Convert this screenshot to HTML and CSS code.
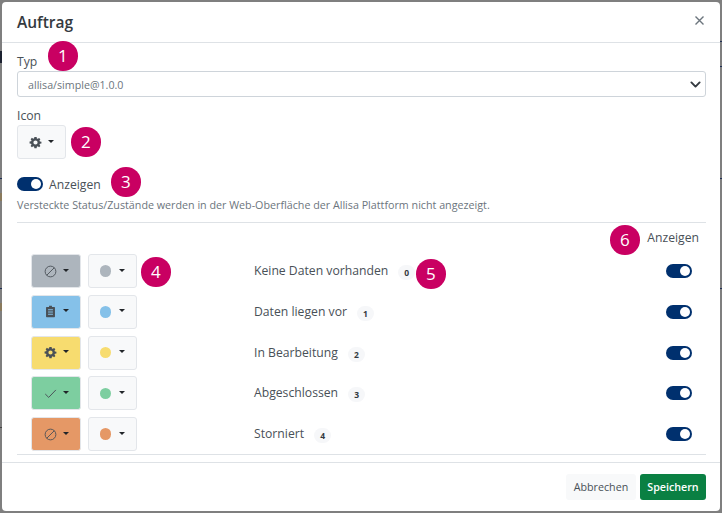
FILE: index.html
```html
<!DOCTYPE html>
<html lang="de">
<head>
<meta charset="utf-8">
<title>Auftrag</title>
<link rel="stylesheet" href="styles.css">
</head>
<body>
<svg class="defs" width="0" height="0" aria-hidden="true">
  <symbol id="i-gear" viewBox="0 0 16 16"><path fill="currentColor" d="M9.4 1.1l.3 1.9c.4.1.8.3 1.1.5l1.6-1.1 1.6 1.6-1.1 1.6c.2.3.4.7.5 1.1l1.9.3v2.2l-1.9.3c-.1.4-.3.8-.5 1.1l1.1 1.6-1.6 1.6-1.6-1.1c-.3.2-.7.4-1.1.5l-.3 1.9H6.6l-.3-1.9c-.4-.1-.8-.3-1.1-.5l-1.6 1.1-1.6-1.6 1.1-1.6c-.2-.3-.4-.7-.5-1.1L.7 9.1V6.9l1.9-.3c.1-.4.3-.8.5-1.1L2 3.9l1.6-1.6 1.6 1.1c.3-.2.7-.4 1.1-.5l.3-1.8zM8 5.4A2.6 2.6 0 1 0 8 10.6 2.6 2.6 0 1 0 8 5.4z"/></symbol>
  <symbol id="i-ban" viewBox="0 0 16 16"><g fill="none" stroke="currentColor" stroke-width="1.1"><circle cx="8" cy="8" r="6.6"/><path d="M12.7 3.3 3.3 12.7"/></g></symbol>
  <symbol id="i-list" viewBox="0 0 16 16"><path fill="currentColor" d="M6.2 1h3.6v1.4h2.9c.5 0 .8.4.8.8v11c0 .5-.4.8-.8.8H3.3c-.5 0-.8-.4-.8-.8v-11c0-.5.4-.8.8-.8h2.9zM5 5.2v1.2h6V5.2zm0 2.8v1.2h6V8zm0 2.8V12h6v-1.2z"/></symbol>
  <symbol id="i-check" viewBox="0 0 16 16"><path fill="none" stroke="currentColor" stroke-width="1.2" d="M1.5 8.6 5.8 12.8 14.6 3.6"/></symbol>
</svg>

<main class="dialog">
  <header class="dialog-head">
    <h1 class="title">Auftrag</h1>
    <svg class="close" width="9" height="9" viewBox="0 0 9 9" aria-label="Schließen"><path fill="none" stroke="#6c757d" stroke-width="1.4" d="M.5.5l8 8M8.5.5l-8 8"/></svg>
  </header>

  <section class="dialog-body">
    <label class="label label-typ">Typ</label>
    <div class="select">
      <span>allisa/simple@1.0.0</span>
      <svg class="chevron" width="11" height="11" viewBox="0 0 16 16"><path fill="none" stroke="#343a40" stroke-width="2.8" stroke-linecap="round" stroke-linejoin="round" d="M2 5l6 6 6-6"/></svg>
    </div>

    <label class="label label-icon">Icon</label>
    <button class="pick pick-light"><svg class="ico"><use href="#i-gear"/></svg><i class="caret"></i></button>

    <div class="show-row">
      <span class="switch"></span>
      <span class="show-text">Anzeigen</span>
    </div>
    <p class="hint">Versteckte Status/Zustände werden in der Web-Oberfläche der Allisa Plattform nicht angezeigt.</p>

    <div class="table-head">Anzeigen</div>

    <div class="rows">
      <div class="row">
        <div class="pickers">
          <button class="pick c-gray"><svg class="ico"><use href="#i-ban"/></svg><i class="caret"></i></button>
          <button class="pick pick-light"><span class="dot c-gray"></span><i class="caret"></i></button>
        </div>
        <span class="name">Keine Daten vorhanden</span><span class="count">0</span>
        <span class="switch switch-end"></span>
      </div>
      <div class="row">
        <div class="pickers">
          <button class="pick c-blue"><svg class="ico"><use href="#i-list"/></svg><i class="caret"></i></button>
          <button class="pick pick-light"><span class="dot c-blue"></span><i class="caret"></i></button>
        </div>
        <span class="name">Daten liegen vor</span><span class="count">1</span>
        <span class="switch switch-end"></span>
      </div>
      <div class="row">
        <div class="pickers">
          <button class="pick c-yellow"><svg class="ico"><use href="#i-gear"/></svg><i class="caret"></i></button>
          <button class="pick pick-light"><span class="dot c-yellow"></span><i class="caret"></i></button>
        </div>
        <span class="name">In Bearbeitung</span><span class="count">2</span>
        <span class="switch switch-end"></span>
      </div>
      <div class="row">
        <div class="pickers">
          <button class="pick c-green"><svg class="ico"><use href="#i-check"/></svg><i class="caret"></i></button>
          <button class="pick pick-light"><span class="dot c-green"></span><i class="caret"></i></button>
        </div>
        <span class="name">Abgeschlossen</span><span class="count">3</span>
        <span class="switch switch-end"></span>
      </div>
      <div class="row">
        <div class="pickers">
          <button class="pick c-orange"><svg class="ico"><use href="#i-ban"/></svg><i class="caret"></i></button>
          <button class="pick pick-light"><span class="dot c-orange"></span><i class="caret"></i></button>
        </div>
        <span class="name">Storniert</span><span class="count">4</span>
        <span class="switch switch-end"></span>
      </div>
    </div>
  </section>

  <footer class="dialog-foot">
    <button class="btn btn-cancel">Abbrechen</button>
    <button class="btn btn-save">Speichern</button>
  </footer>

  <span class="mark m1">1</span>
  <span class="mark m2">2</span>
  <span class="mark m3">3</span>
  <span class="mark m4">4</span>
  <span class="mark m5">5</span>
  <span class="mark m6">6</span>
</main>
</body>
</html>
```

FILE: styles.css
```css
* { box-sizing: border-box; }
html, body { height: 100%; }
body {
  margin: 0;
  padding: 2px;
  overflow: hidden;
  background-color: #7f7f7f;
  background-repeat: no-repeat;
  background-image:
    linear-gradient(#1b2130, #1b2130), linear-gradient(#8a7a5c, #8a7a5c),
    linear-gradient(#8a7a5c, #8a7a5c), linear-gradient(#1f2f55, #1f2f55),
    linear-gradient(#1f2f55, #1f2f55), linear-gradient(#444, #444),
    linear-gradient(#1f2f55, #1f2f55), linear-gradient(#1f2f55, #1f2f55),
    linear-gradient(#1f2f55, #1f2f55), linear-gradient(#1f2f55, #1f2f55);
  background-size:
    2px 12px, 2px 8px, 2px 8px, 2px 1px, 2px 1px, 2px 1px,
    2px 1px, 2px 1px, 2px 1px, 2px 1px;
  background-position:
    0 51px, 0 193px, 0 303px, 0 178px, 0 288px, 0 427px,
    720px 41px, 720px 66px, 720px 178px, 720px 288px;
  color: #343a40;
  font-family: "Open Sans", "Noto Sans", sans-serif;
  font-size: 12.2px;
}
.defs { position: absolute; }
button { font: inherit; color: inherit; }

.dialog {
  position: relative;
  width: 718px;
  height: 509px;
  background: #fff;
  border-radius: 4px;
  display: flex;
  flex-direction: column;
}
.dialog-head {
  height: 41px;
  flex: none;
  border-bottom: 1px solid #dee2e6;
  padding: 0 14px 0 15px;
  display: flex;
  align-items: center;
  justify-content: space-between;
}
.title { margin: 0; font-size: 15.5px; font-weight: 600; color: #343a40; }
.close { margin: -3px 2px 0 0; }

.dialog-body { flex: 1; padding: 0 14px 0 15px; }
.label { display: block; color: #495057; line-height: 16px; }
.label-typ { margin-top: 11px; height: 17px; }
.label-icon { margin-top: 11px; height: 17px; }

.select {
  height: 26px;
  border: 1px solid #ced4da;
  border-radius: 3px;
  padding: 2px 4px 0 10px;
  display: flex;
  align-items: center;
  justify-content: space-between;
  font-size: 10.7px;
  color: #6c757d;
}
.chevron { margin-top: -2px; }
.pick {
  width: 49px;
  height: 34px;
  padding: 0;
  border: 1px solid #e3e6ea;
  border-radius: 3px;
  background: #f8f9fa;
  display: flex;
  align-items: center;
  justify-content: center;
  gap: 6px;
  color: #495057;
}
.ico { width: 13px; height: 13px; }
.caret {
  width: 0;
  height: 0;
  margin-top: -2px;
  border-left: 3.5px solid transparent;
  border-right: 3.5px solid transparent;
  border-top: 3.5px solid #212529;
}
.dot { width: 11.5px; height: 11.5px; border-radius: 50%; margin-right: 2px; }

.show-row { display: flex; align-items: center; gap: 6px; margin-top: 16px; height: 18px; }
.show-text { color: #495057; }
.switch {
  position: relative;
  flex: none;
  width: 26px;
  height: 14px;
  border-radius: 7px;
  background: #00306e;
}
.switch::after {
  content: "";
  position: absolute;
  top: 2px;
  right: 2px;
  width: 10px;
  height: 10px;
  border-radius: 50%;
  background: #fff;
}
.hint {
  margin: 5px 0 0;
  padding-bottom: 10px;
  border-bottom: 1px solid #dee2e6;
  font-size: 10.73px;
  line-height: 14px;
  white-space: nowrap;
  color: #6c757d;
}
.table-head { text-align: right; padding-right: 7px; line-height: 16px; height: 31px; padding-top: 7px; color: #495057; }

.rows { height: 201px; border-bottom: 1px solid #dee2e6; }
.row {
  height: 40.75px;
  padding: 0 14px;
  display: flex;
  align-items: flex-start;
}
.pickers { display: flex; gap: 7px; width: 223px; flex: none; }
.pickers .pick:first-child { width: 50px; }
.name { line-height: 34px; color: #495057; }
.count {
  margin: 11px 0 0 10px;
  min-width: 17px;
  height: 15px;
  padding: 0 5px;
  border-radius: 8px;
  background: #f6f7f9;
  font-size: 8.5px;
  font-weight: 700;
  line-height: 15px;
  text-align: center;
  color: #343a40;
}
.switch-end { margin: 10px 0 0 auto; }

.c-gray { background: #adb5bd; }
.c-blue { background: #85c1e9; }
.c-yellow { background: #f7dc6f; }
.c-green { background: #7dcea0; }
.c-orange { background: #e59866; }

.dialog-foot {
  height: 49px;
  flex: none;
  border-top: 1px solid #dee2e6;
  padding: 11px 14px 0 15px;
  display: flex;
  justify-content: flex-end;
  gap: 4px;
}
.btn { height: 26px; padding: 0; border: 0; border-radius: 3px; font-size: 10.7px; }
.btn-cancel { width: 70px; background: #f8f9fa; color: #495057; }
.btn-save { width: 66px; background: #0a8043; color: #fff; font-weight: 600; }

.mark {
  position: absolute;
  width: 29.5px;
  height: 29.5px;
  border-radius: 50%;
  background: #c90062;
  color: #fff;
  font-size: 17px;
  line-height: 29.5px;
  text-align: center;
}
.m1 { left: 46px; top: 39px; }
.m2 { left: 69px; top: 125px; }
.m3 { left: 109px; top: 165px; }
.m4 { left: 139px; top: 255px; }
.m5 { left: 414px; top: 257px; }
.m6 { left: 608px; top: 223px; }
```
